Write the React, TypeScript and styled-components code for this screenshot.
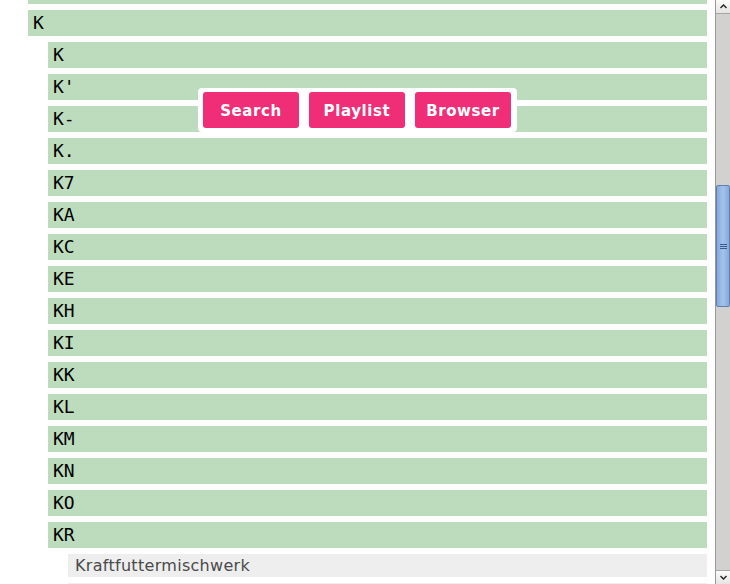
import React from "react";
import styled, { createGlobalStyle } from "styled-components";

const Global = createGlobalStyle`
  html, body { margin: 0; padding: 0; height: 100%; overflow: hidden; background: #fff; }
  body { margin: 0; }
`;

const Page = styled.div`
  width: 715px;
  height: 584px;
  overflow: hidden;
  box-sizing: border-box;
  padding: 0 8px 0 8px;
`;

const Scroller = styled.div`
  margin-top: -22px;
`;

const List = styled.ul`
  list-style: none;
  margin: 0;
  padding: 0 0 0 20px;
  display: flex;
  flex-direction: column;
  gap: 6px;
`;

const Item = styled.li`
  display: flex;
  flex-direction: column;
  gap: 6px;
`;

const Label = styled.div<{ $leaf?: boolean }>`
  box-sizing: border-box;
  height: ${(p) => (p.$leaf ? 23 : 26)}px;
  line-height: ${(p) => (p.$leaf ? 23 : 26)}px;
  padding-left: ${(p) => (p.$leaf ? 7 : 5)}px;
  background: ${(p) => (p.$leaf ? "#eeeeee" : "#bddcbd")};
  color: ${(p) => (p.$leaf ? "#4a4a4a" : "#000")};
  font-family: ${(p) => (p.$leaf ? '"DejaVu Sans", sans-serif' : '"DejaVu Sans Mono", monospace')};
  font-size: ${(p) => (p.$leaf ? 16 : 18)}px;
  letter-spacing: ${(p) => (p.$leaf ? "0.3px" : "0")};
  white-space: pre;
`;

const Menu = styled.div`
  position: fixed;
  left: 198px;
  top: 88px;
  background: #fff;
  border-radius: 4px;
  padding: 4px 6px 4px 5px;
  display: flex;
  gap: 10px;
`;

const Btn = styled.button`
  width: 96px;
  height: 36px;
  border: none;
  border-radius: 3px;
  background: #f02e77;
  color: #fff;
  font-family: "DejaVu Sans", sans-serif;
  font-weight: bold;
  font-size: 15px;
  letter-spacing: 0.6px;
  padding: 2px 0 0 0;
  cursor: pointer;
`;

const Bar = styled.div`
  position: fixed;
  top: 0;
  right: 0;
  width: 15px;
  height: 584px;
  box-sizing: border-box;
  background: #d3d1cf;
  border-left: 1px solid #9a9896;
  display: flex;
  flex-direction: column;
  align-items: stretch;
`;

const Arrow = styled.div`
  height: 13px;
  background: linear-gradient(#fbfbfa, #e6e4e2);
  border-bottom: 1px solid #a8a6a4;
  display: flex;
  align-items: center;
  justify-content: center;
  &:last-child {
    border-bottom: none;
    border-top: 1px solid #a8a6a4;
  }
`;

const Track = styled.div`
  flex: 1;
  padding-top: 171px;
`;

const Thumb = styled.div`
  height: 122px;
  box-sizing: border-box;
  border: 1px solid #5f7fae;
  border-radius: 2px;
  background: linear-gradient(90deg, #86aade, #a5c2ea 50%, #86aade);
  display: flex;
  align-items: center;
  justify-content: center;
`;

const level1 = ["K", "K'", "K-", "K.", "K7", "KA", "KC", "KE", "KH", "KI", "KK", "KL", "KM", "KN", "KO"];

export default function App() {
  return (
    <>
      <Global />
      <Page>
        <Scroller>
          <List>
            <Item>
              <Label>I</Label>
            </Item>
            <Item>
              <Label>K</Label>
              <List>
                {level1.map((k) => (
                  <Item key={k}>
                    <Label>{k}</Label>
                  </Item>
                ))}
                <Item>
                  <Label>KR</Label>
                  <List>
                    <Item>
                      <Label $leaf>Kraftfuttermischwerk</Label>
                    </Item>
                    <Item>
                      <Label $leaf>Krankheit</Label>
                    </Item>
                  </List>
                </Item>
              </List>
            </Item>
          </List>
        </Scroller>
      </Page>
      <Menu>
        <Btn>Search</Btn>
        <Btn>Playlist</Btn>
        <Btn>Browser</Btn>
      </Menu>
      <Bar>
        <Arrow>
          <svg width="7" height="5" viewBox="0 0 7 5">
            <path d="M0.5 4 L3.5 1 L6.5 4" fill="none" stroke="#222" strokeWidth="1.4" />
          </svg>
        </Arrow>
        <Track>
          <Thumb>
            <svg width="7" height="7" viewBox="0 0 7 7">
              <path d="M0 1.5 H7 M0 3.5 H7 M0 5.5 H7" stroke="#3d5a8a" strokeWidth="1" />
            </svg>
          </Thumb>
        </Track>
        <Arrow>
          <svg width="7" height="5" viewBox="0 0 7 5">
            <path d="M0.5 1 L3.5 4 L6.5 1" fill="none" stroke="#222" strokeWidth="1.4" />
          </svg>
        </Arrow>
      </Bar>
    </>
  );
}
